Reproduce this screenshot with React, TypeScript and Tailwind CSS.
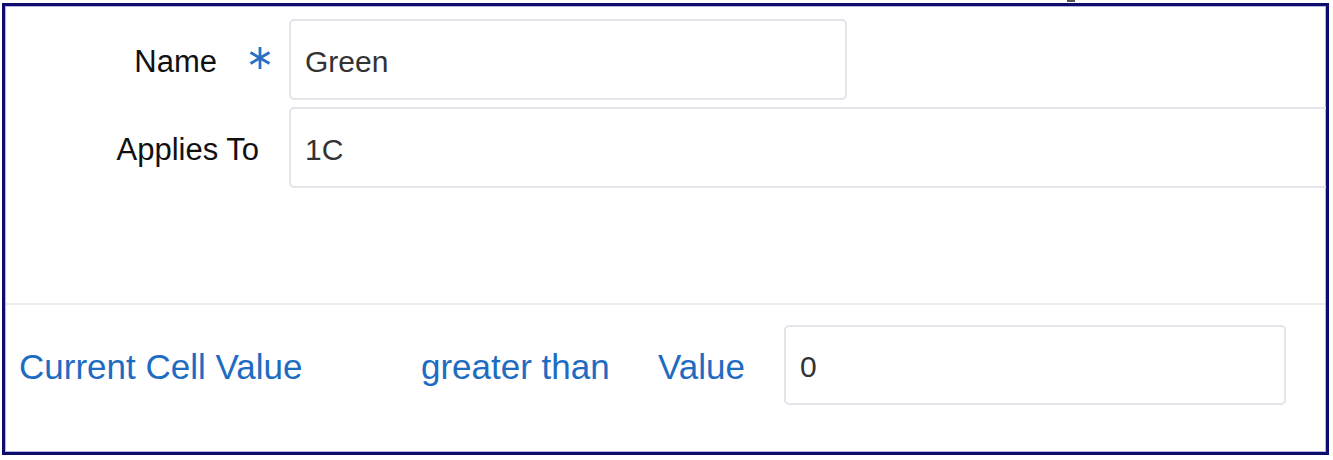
import React from "react";

const font = { fontFamily: '"Liberation Sans", Arial, sans-serif' };

function Asterisk() {
  return (
    <svg width="24" height="24" viewBox="0 0 24 24" className="shrink-0">
      <g stroke="#2a6fc4" strokeWidth="2.8" strokeLinecap="butt">
        <line x1="12" y1="1" x2="12" y2="23" />
        <line x1="2.5" y1="6.5" x2="21.5" y2="17.5" />
        <line x1="21.5" y1="6.5" x2="2.5" y2="17.5" />
      </g>
    </svg>
  );
}

export default function App() {
  return (
    <div className="relative w-[1333px] h-[460px] bg-white overflow-hidden" style={font}>
      <span className="absolute left-[1067px] top-0 w-[8px] h-[2px] bg-[#555]" />
      <div className="ml-[2px] mt-[3px] w-[1327px] h-[452px] border-[3px] border-[#0c0c6c] shadow-[inset_0_0_0_1px_#b4b4de] overflow-hidden flex flex-col pt-[13px]">
        <div className="flex items-center h-[81px] shrink-0">
          <div className="w-[284px] shrink-0 flex items-center justify-end pr-[17px]">
            <span className="text-[31px] leading-none text-[#111] pt-[4px]">Name</span>
            <span className="ml-[31px] -mt-[4px]">
              <Asterisk />
            </span>
          </div>
          <div className="w-[558px] shrink-0 h-full border-2 border-[#e2e5e9] rounded-[5px] flex items-center px-[14px] pt-[3px] text-[30px] text-[#333]">
            Green
          </div>
        </div>
        <div className="flex items-center h-[81px] mt-[7px] shrink-0">
          <div className="w-[284px] shrink-0 flex items-center justify-end pr-[30px]">
            <span className="text-[31px] leading-none text-[#111] pt-[4px]">Applies To</span>
          </div>
          <div className="w-[1100px] shrink-0 h-full border-2 border-[#e2e5e9] rounded-[5px] flex items-center px-[14px] pt-[3px] text-[30px] text-[#333]">
            1C
          </div>
        </div>
        <div className="mt-[115px] h-[2px] bg-[#ececec] mx-[1px] shrink-0" />
        <div className="flex items-center h-[80px] mt-[20px] shrink-0 text-[35px] leading-none text-[#1e6cc2]">
          <span className="ml-[14px] w-[402px] shrink-0 pt-[3px]">Current Cell Value</span>
          <span className="w-[237px] shrink-0 pt-[3px]">greater than</span>
          <span className="w-[126px] shrink-0 pt-[3px]">Value</span>
          <div className="w-[502px] shrink-0 h-full border-2 border-[#e2e5e9] rounded-[5px] flex items-center px-[14px] pt-[3px] text-[30px] text-[#333]">
            0
          </div>
        </div>
      </div>
    </div>
  );
}
